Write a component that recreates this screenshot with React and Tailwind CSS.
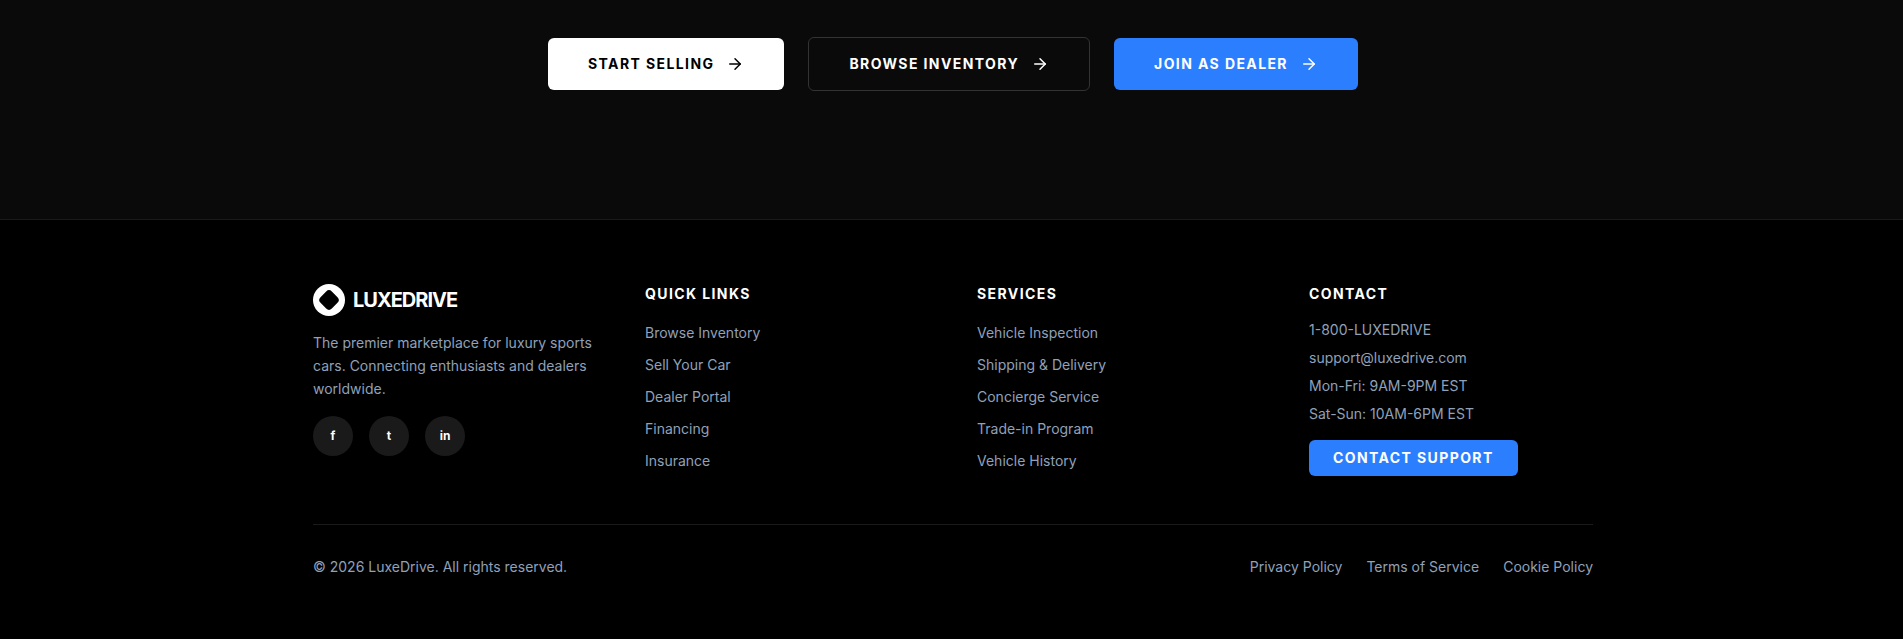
import React from 'react';
import { ArrowRight } from 'lucide-react';

const quickLinks = ['Browse Inventory', 'Sell Your Car', 'Dealer Portal', 'Financing', 'Insurance'];
const services = ['Vehicle Inspection', 'Shipping & Delivery', 'Concierge Service', 'Trade-in Program', 'Vehicle History'];
const contact = ['1-800-LUXEDRIVE', 'support@luxedrive.com', 'Mon-Fri: 9AM-9PM EST', 'Sat-Sun: 10AM-6PM EST'];
const socials = ['f', 't', 'in'];
const legal = ['Privacy Policy', 'Terms of Service', 'Cookie Policy'];

function LinkColumn({ title, links }) {
  return (
    <div>
      <h4 className="text-sm font-bold tracking-widest text-white mb-4">{title}</h4>
      <ul className="flex flex-col gap-2">
        {links.map(link => (
          <li key={link}>
            <a href="#" className="text-sm text-slate-400">{link}</a>
          </li>
        ))}
      </ul>
    </div>
  );
}

export default function App() {
  return (
    <div className="min-h-[639px] bg-black font-['Inter',sans-serif]">
      {/* CTA strip */}
      <section className="bg-[#0a0a0a] pt-[37px] pb-32 pl-[3px]">
        <div className="flex items-center justify-center gap-6">
          <button className="flex items-center gap-3 rounded-md bg-white px-10 py-4 text-sm font-bold tracking-widest text-black">
            START SELLING
            <ArrowRight className="h-[18px] w-[18px]" />
          </button>
          <button className="flex items-center gap-3 rounded-md border border-[#333333] px-10 py-4 text-sm font-bold tracking-widest text-white">
            BROWSE INVENTORY
            <ArrowRight className="h-[18px] w-[18px]" />
          </button>
          <button className="flex items-center gap-3 rounded-md bg-blue-500 px-10 py-4 text-sm font-bold tracking-widest text-white">
            JOIN AS DEALER
            <ArrowRight className="h-[18px] w-[18px]" />
          </button>
        </div>
      </section>

      <footer className="border-t border-[#1a1a1a] bg-black pl-[3px]">
        <div className="mx-auto max-w-7xl pt-16">
          <div className="grid grid-cols-4 gap-12">
            <div>
              <div className="mb-4 flex items-center gap-2">
                <div className="flex h-8 w-8 items-center justify-center rounded-full bg-white">
                  <div className="h-4 w-4 rotate-45 rounded-[4px] bg-black" />
                </div>
                <span className="text-xl font-bold tracking-tighter text-white">LUXEDRIVE</span>
              </div>
              <p className="mb-4 text-sm leading-relaxed text-slate-400">
                The premier marketplace for luxury sports cars. Connecting enthusiasts and dealers worldwide.
              </p>
              <div className="flex gap-4">
                {socials.map(s => (
                  <a key={s} href="#" className="flex h-10 w-10 items-center justify-center rounded-full bg-[#1a1a1a] text-xs font-bold text-white">
                    {s}
                  </a>
                ))}
              </div>
            </div>

            <LinkColumn title="QUICK LINKS" links={quickLinks} />
            <LinkColumn title="SERVICES" links={services} />

            <div>
              <h4 className="mb-4 text-sm font-bold tracking-widest text-white">CONTACT</h4>
              <ul className="flex flex-col gap-2">
                {contact.map(line => (
                  <li key={line} className="text-sm text-slate-400">{line}</li>
                ))}
              </ul>
              <button className="mt-4 rounded-md bg-blue-500 px-6 py-2 text-sm font-bold tracking-widest text-white">
                CONTACT SUPPORT
              </button>
            </div>
          </div>

          <div className="mt-12 flex items-center justify-between border-t border-[#1a1a1a] pt-8">
            <p className="text-sm text-slate-400">© 2026 LuxeDrive. All rights reserved.</p>
            <div className="flex gap-6">
              {legal.map(item => (
                <a key={item} href="#" className="text-sm text-slate-400">{item}</a>
              ))}
            </div>
          </div>
        </div>
      </footer>
    </div>
  );
}
